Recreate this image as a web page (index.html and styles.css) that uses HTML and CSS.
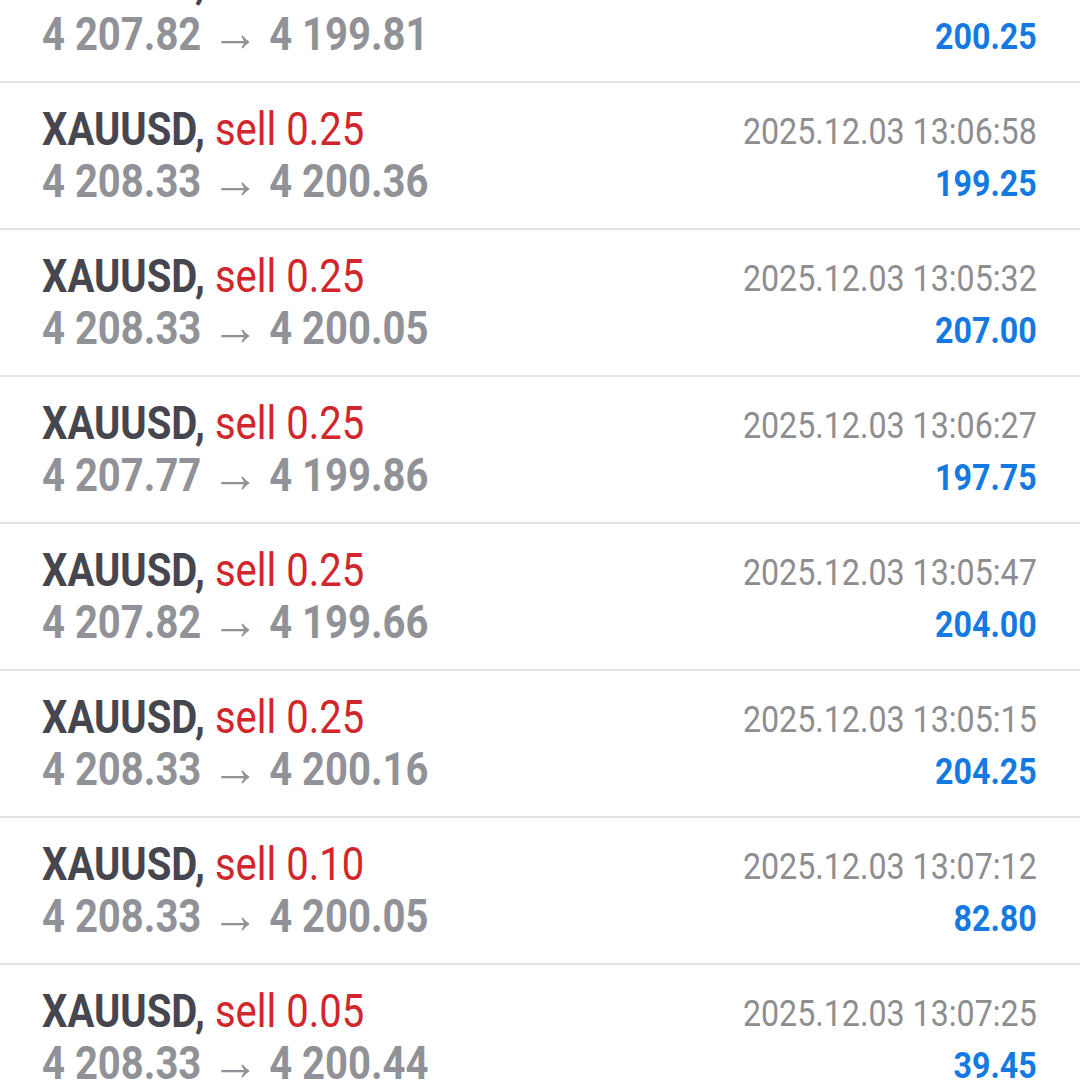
FILE: index.html
```html
<!DOCTYPE html>
<html>
<head>
<meta charset="utf-8">
<link rel="stylesheet" href="styles.css">
</head>
<body>
<div class="list">
  <div class="deal">
    <div class="left"><div class="l1"><span class="sym">XAUUSD,</span> <span class="sell">sell 0.25</span></div><div class="l2">4 207.82<span class="arr">→</span>4 199.81</div></div>
    <div class="right"><div class="l1 date">2025.12.03 13:06:41</div><div class="l2 profit">200.25</div></div>
  </div>
  <div class="deal">
    <div class="left"><div class="l1"><span class="sym">XAUUSD,</span> <span class="sell">sell 0.25</span></div><div class="l2">4 208.33<span class="arr">→</span>4 200.36</div></div>
    <div class="right"><div class="l1 date">2025.12.03 13:06:58</div><div class="l2 profit">199.25</div></div>
  </div>
  <div class="deal">
    <div class="left"><div class="l1"><span class="sym">XAUUSD,</span> <span class="sell">sell 0.25</span></div><div class="l2">4 208.33<span class="arr">→</span>4 200.05</div></div>
    <div class="right"><div class="l1 date">2025.12.03 13:05:32</div><div class="l2 profit">207.00</div></div>
  </div>
  <div class="deal">
    <div class="left"><div class="l1"><span class="sym">XAUUSD,</span> <span class="sell">sell 0.25</span></div><div class="l2">4 207.77<span class="arr">→</span>4 199.86</div></div>
    <div class="right"><div class="l1 date">2025.12.03 13:06:27</div><div class="l2 profit">197.75</div></div>
  </div>
  <div class="deal">
    <div class="left"><div class="l1"><span class="sym">XAUUSD,</span> <span class="sell">sell 0.25</span></div><div class="l2">4 207.82<span class="arr">→</span>4 199.66</div></div>
    <div class="right"><div class="l1 date">2025.12.03 13:05:47</div><div class="l2 profit">204.00</div></div>
  </div>
  <div class="deal">
    <div class="left"><div class="l1"><span class="sym">XAUUSD,</span> <span class="sell">sell 0.25</span></div><div class="l2">4 208.33<span class="arr">→</span>4 200.16</div></div>
    <div class="right"><div class="l1 date">2025.12.03 13:05:15</div><div class="l2 profit">204.25</div></div>
  </div>
  <div class="deal">
    <div class="left"><div class="l1"><span class="sym">XAUUSD,</span> <span class="sell">sell 0.10</span></div><div class="l2">4 208.33<span class="arr">→</span>4 200.05</div></div>
    <div class="right"><div class="l1 date">2025.12.03 13:07:12</div><div class="l2 profit">82.80</div></div>
  </div>
  <div class="deal">
    <div class="left"><div class="l1"><span class="sym">XAUUSD,</span> <span class="sell">sell 0.05</span></div><div class="l2">4 208.33<span class="arr">→</span>4 200.44</div></div>
    <div class="right"><div class="l1 date">2025.12.03 13:07:25</div><div class="l2 profit">39.45</div></div>
  </div>
</div>
</body>
</html>
```
FILE: styles.css
```css
html, body {
  margin: 0;
  padding: 0;
  background: #ffffff;
  overflow: hidden;
}
body {
  width: 1080px;
  height: 1080px;
  font-family: Roboto, "Noto Sans", sans-serif;
}
.list {
  margin-top: -64px;
  display: flex;
  flex-direction: column;
}
.deal {
  box-sizing: border-box;
  height: 147px;
  border-bottom: 2px solid #e4e4e4;
  display: flex;
  justify-content: space-between;
  padding: 20px 43px 0 42px;
}
.left, .right {
  display: flex;
  flex-direction: column;
  white-space: nowrap;
}
.left {
  transform: scaleX(0.87);
  transform-origin: left top;
}
.right {
  align-items: flex-end;
  transform: scaleX(0.87);
  transform-origin: right top;
}
.l1, .l2 {
  height: 52px;
  line-height: 52px;
}
.left .l1 {
  font-size: 46px;
}
.sym {
  font-weight: 700;
  color: #46464e;
}
.sell {
  font-weight: 400;
  color: #d0262c;
}
.left .l2 {
  font-size: 46px;
  font-weight: 700;
  color: #909297;
}
.arr {
  display: inline-block;
  font-weight: 400;
  font-size: 54px;
  line-height: 40px;
  margin: 0 12px 0 12px;
  vertical-align: -1px;
  color: #909297;
}
.date {
  font-size: 37px;
  color: #8e8e90;
  padding-top: 3px;
  height: 49px;
}
.profit {
  font-size: 37px;
  font-weight: 700;
  color: #1479e0;
  padding-top: 3px;
  height: 49px;
}
```
